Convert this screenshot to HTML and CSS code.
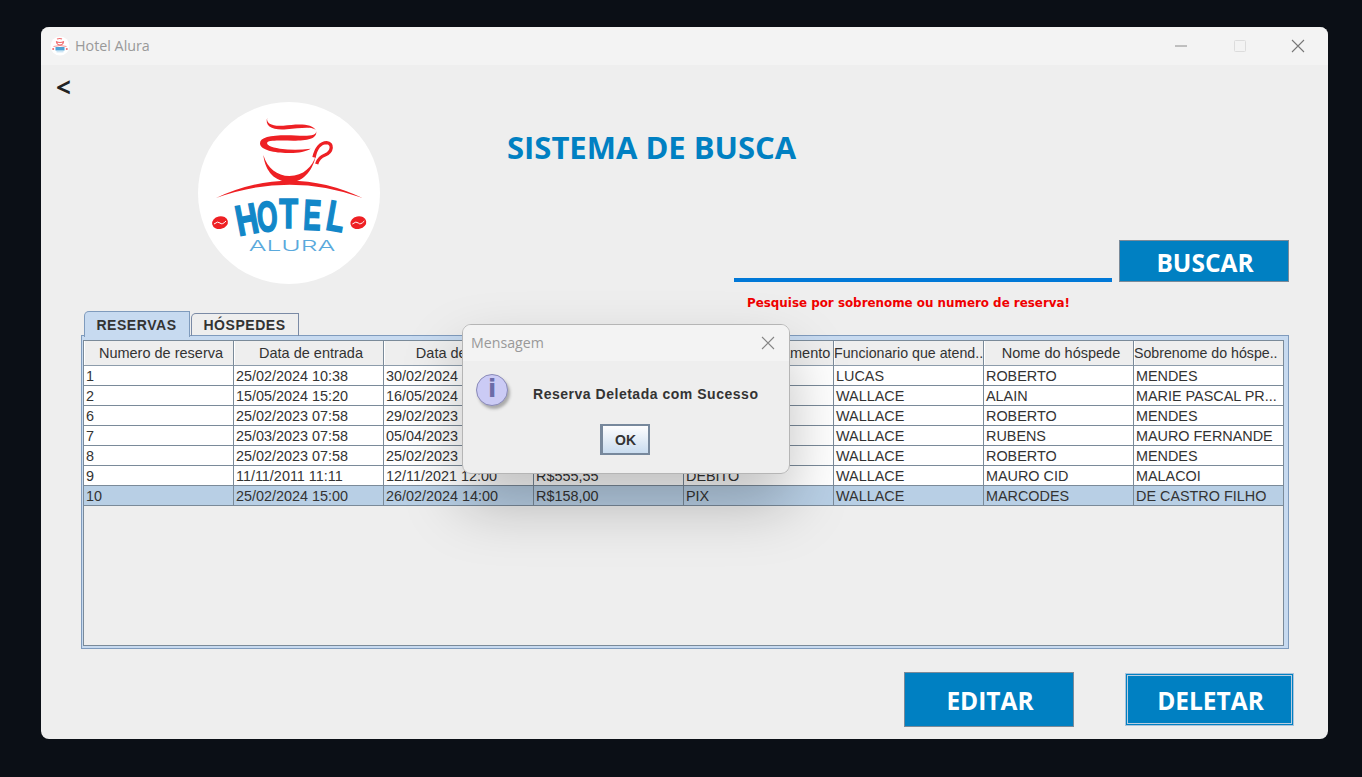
FILE: index.html
```html
<!DOCTYPE html>
<html lang="pt-BR">
<head>
    <meta charset="UTF-8">
    <meta name="viewport" content="width=device-width, initial-scale=1.0">
    <title>Hotel Alura</title>
    <link rel="stylesheet" href="styles.css">
</head>
<body>
    <div class="window">
        <!-- Title bar -->
        <div class="titlebar">
            <svg class="app-icon" viewBox="0 0 20 20">
                <circle cx="10" cy="10" r="9.5" fill="#fff"/>
                <path d="M7 3q3-1 5 0M6 5.500q4 2 8 0M6.500 6q.5 3 3.500 3T13.500 6" fill="none" stroke="#f0686a" stroke-width="1.100"/>
                <path d="M3.500 10.500q6.500-2 13 0" fill="none" stroke="#f0686a" stroke-width=".7"/>
                <path d="M5.500 11h9v3.500h-9z" fill="#4fa3d6"/>
                <path d="M6.500 15.800h7" stroke="#a8d2ec" stroke-width=".8"/>
                <circle cx="3.200" cy="13" r="1" fill="#f0686a"/>
                <circle cx="16.800" cy="13" r="1" fill="#f0686a"/>
            </svg>
            <span class="app-name">Hotel Alura</span>
            <div class="controls">
                <svg viewBox="0 0 14 14"><path d="M1 7h12" stroke="#8a8a8a" stroke-width="1"/></svg>
                <svg viewBox="0 0 14 14"><rect x="1.500" y="1.500" width="11" height="11" rx="1" fill="none" stroke="#dcdcdc"/></svg>
                <svg viewBox="0 0 14 14"><path d="M1 1l12 12M13 1L1 13" stroke="#777" stroke-width="1.100"/></svg>
            </div>
        </div>

        <div class="content">
            <div class="back">&lt;</div>

            <div class="top">
                <!-- Logo -->
                <svg class="logo" viewBox="24 6 546 546">
                    <circle cx="297" cy="279" r="273" fill="#fff"/>
                    <g fill="#ee2024">
                        <path d="M232 52C226 72 250 80 280 77 320 72 368 68 378 92 372 78 330 84 290 88 250 92 222 80 232 52z"/>
                        <path d="M378 90C385 115 330 106 290 106 240 106 210 113 210 130 210 152 260 160 300 159 325 159 350 154 362 146 330 150 300 150 270 146 242 142 228 135 232 127 238 120 280 122 310 122 350 122 385 118 378 90z"/>
                        <path d="M220 165C226 215 255 246 300 246 345 246 370 205 378 165 368 200 340 228 298 228 262 228 232 205 220 165z"/>
                        <path d="M78 294Q300 190 518 294 300 214 78 294z"/>
                    </g>
                    <path d="M372 172C378 145 392 128 410 128 430 130 428 155 405 165 392 170 384 178 380 192" fill="none" stroke="#ee2024" stroke-width="10"/>
                    <g class="logo-big" fill="#1287c8" stroke="#1287c8" stroke-width="5">
                        <text transform="translate(146 408) rotate(-11) scale(.72 1)">H</text>
                        <text transform="translate(204 396) rotate(-4) scale(.62 1)">O</text>
                        <text transform="translate(268 385) scale(.72 1)">T</text>
                        <text transform="translate(338 388) rotate(3) scale(.62 1)">E</text>
                        <text transform="translate(404 388) rotate(10) scale(.68 1)">L</text>
                    </g>
                    <text class="logo-small" x="176" y="452" textLength="260" lengthAdjust="spacingAndGlyphs" fill="#5aa9dc">ALURA</text>
                    <g fill="#ee2024">
                        <ellipse cx="90" cy="368" rx="24" ry="19" transform="rotate(-12 90 368)"/>
                        <ellipse cx="505" cy="368" rx="24" ry="19" transform="rotate(-12 505 368)"/>
                    </g>
                    <path d="M72 372q12-10 18-3t18-6M487 372q12-10 18-3t18-6" fill="none" stroke="#fff" stroke-width="3"/>
                </svg>

                <div class="top-right">
                    <h1>SISTEMA DE BUSCA</h1>
                    <div class="search">
                        <div class="search-input"></div>
                        <button class="btn btn-search">BUSCAR</button>
                    </div>
                    <p class="hint">Pesquise por sobrenome ou numero de reserva!</p>
                </div>
            </div>

            <!-- Tabs -->
            <div class="tabs">
                <div class="tab active">RESERVAS</div>
                <div class="tab">HÓSPEDES</div>
            </div>
            <div class="tab-pane">
                <div class="table-box">
                    <table>
                        <thead>
                            <tr>
                                <th>Numero de reserva</th>
                                <th>Data de entrada</th>
                                <th>Data de saída</th>
                                <th>Valor</th>
                                <th>Forma de pagamento</th>
                                <th class="th-fit">Funcionario que atend..</th>
                                <th>Nome do hóspede</th>
                                <th class="th-fit">Sobrenome do hóspe..</th>
                            </tr>
                        </thead>
                        <tbody>
                            <tr><td>1</td><td>25/02/2024 10:38</td><td>30/02/2024</td><td></td><td></td><td>LUCAS</td><td>ROBERTO</td><td>MENDES</td></tr>
                            <tr><td>2</td><td>15/05/2024 15:20</td><td>16/05/2024</td><td></td><td></td><td>WALLACE</td><td>ALAIN</td><td>MARIE PASCAL PR...</td></tr>
                            <tr><td>6</td><td>25/02/2023 07:58</td><td>29/02/2023</td><td></td><td></td><td>WALLACE</td><td>ROBERTO</td><td>MENDES</td></tr>
                            <tr><td>7</td><td>25/03/2023 07:58</td><td>05/04/2023</td><td></td><td></td><td>WALLACE</td><td>RUBENS</td><td>MAURO FERNANDE</td></tr>
                            <tr><td>8</td><td>25/02/2023 07:58</td><td>25/02/2023</td><td></td><td></td><td>WALLACE</td><td>ROBERTO</td><td>MENDES</td></tr>
                            <tr><td>9</td><td>11/11/2011 11:11</td><td>12/11/2021 12:00</td><td>R$555,55</td><td>DEBITO</td><td>WALLACE</td><td>MAURO CID</td><td>MALACOI</td></tr>
                            <tr class="selected"><td>10</td><td>25/02/2024 15:00</td><td>26/02/2024 14:00</td><td>R$158,00</td><td>PIX</td><td>WALLACE</td><td>MARCODES</td><td>DE CASTRO FILHO</td></tr>
                        </tbody>
                    </table>
                </div>
            </div>

            <!-- Bottom buttons -->
            <div class="actions">
                <button class="btn btn-action">EDITAR</button>
                <button class="btn btn-action btn-focus">DELETAR</button>
            </div>
        </div>

        <!-- Message dialog -->
        <div class="dialog">
            <div class="dialog-title">
                <span>Mensagem</span>
                <svg viewBox="0 0 14 14"><path d="M1 1l12 12M13 1L1 13" stroke="#858585" stroke-width="1.100"/></svg>
            </div>
            <div class="dialog-body">
                <div class="dialog-msg">
                    <div class="info-icon">i</div>
                    <p>Reserva Deletada com Sucesso</p>
                </div>
                <button class="btn-ok">OK</button>
            </div>
        </div>
    </div>
</body>
</html>
```

FILE: styles.css
```css
/* General Styles */
* {
    box-sizing: border-box;
}
html, body {
    height: 100%;
}
body {
    margin: 0;
    padding: 27px 34px 38px 41px;
    background-color: #0b0f16;
    font-family: "Liberation Sans", Arial, sans-serif;
    overflow: hidden;
}
.window {
    position: relative;
    height: 712px;
    border-radius: 8px;
    background-color: #eeeeee;
    overflow: hidden;
    box-shadow: inset 0 1px 0 #555;
}

/* Title bar */
.titlebar {
    display: flex;
    align-items: center;
    height: 38px;
    padding-left: 9px;
    padding-bottom: 1px;
    background-color: #f3f3f3;
}
.app-icon {
    width: 20px;
    height: 20px;
}
.app-name {
    margin-left: 5px;
    font-family: "Open Sans", sans-serif;
    font-size: 14.3px;
    color: #999;
}
.controls {
    display: flex;
    gap: 44.5px;
    margin-left: auto;
    margin-right: 23px;
}
.controls svg {
    width: 14px;
    height: 14px;
}

/* Main content */
.content {
    padding: 10px 34px 0 40px;
}
.back {
    height: 27px;
    margin-left: -25px;
    font-family: "Open Sans", sans-serif;
    font-size: 26px;
    font-weight: 700;
    line-height: 24px;
    color: #222;
}
.top {
    display: flex;
    height: 209px;
    padding-left: 117px;
    padding-right: 5px;
}
.logo {
    flex: none;
    width: 182px;
    height: 182px;
}
.logo-big text {
    font-family: "Liberation Sans", sans-serif;
    font-size: 128px;
    font-weight: 700;
}
.logo-small {
    font-family: "Inter", sans-serif;
    font-size: 44px;
    font-weight: 300;
}
.top-right {
    flex: 1;
    padding-left: 127px;
}
h1 {
    margin: 25px 0 0;
    font-family: "Open Sans", sans-serif;
    font-size: 31px;
    font-weight: 700;
    line-height: 40px;
    color: #0080c2;
}
.search {
    display: flex;
    align-items: flex-end;
    gap: 7px;
    margin-top: 73px;
    padding-left: 227px;
}
.search-input {
    flex: 1;
    height: 4px;
    background-color: #0078d7;
}
.hint {
    margin: 13px 0 0 240px;
    font-family: "DejaVu Sans", sans-serif;
    font-size: 11.9px;
    font-weight: 700;
    line-height: 16px;
    color: #f00000;
}

/* Buttons */
.btn {
    border: 1px solid #7a8a99;
    background-color: #0080c2;
    font-family: "Open Sans", sans-serif;
    font-weight: 700;
    color: #fff;
    padding: 2px 0 0 2px;
}
.btn-search {
    width: 170px;
    height: 42px;
    font-size: 24.5px;
}
.actions {
    display: flex;
    justify-content: flex-end;
    align-items: center;
    gap: 51px;
    margin-top: 23px;
}
.btn-action {
    width: 170px;
    height: 55px;
    font-size: 24.5px;
}
.btn-focus {
    width: 169px;
    height: 53px;
    border: 1px solid #a9c3dc;
    outline: 1px solid #b9cde0;
    outline-offset: -3px;
}

/* Tabs */
.tabs {
    display: flex;
    gap: 1px;
    height: 25px;
    margin-left: 3px;
    align-items: flex-end;
}
.tab {
    width: 108px;
    height: 23px;
    padding-right: 1px;
    border: 1px solid #7a8aa5;
    border-bottom: none;
    font-size: 14px;
    font-weight: 700;
    letter-spacing: .55px;
    line-height: 23px;
    text-align: center;
    color: #333;
}
.tab:first-child {
    border-top-left-radius: 5px;
}
.tab:nth-child(2) {
    border-top-left-radius: 5px;
}
.tab.active {
    position: relative;
    z-index: 1;
    width: 106px;
    height: 26px;
    background-color: #c7daf0;
    border-color: #7f9bbd;
    line-height: 27px;
    margin-bottom: -1px;
}
.tab-pane {
    display: flex;
    height: 314px;
    margin-top: -1px;
    margin-right: 5px;
    padding: 4px 4px 2px 1px;
    border: 1px solid #7f9bbd;
    background-color: #c7daf0;
}
.table-box {
    flex: 1;
    border: 1px solid #7a8a99;
    background-color: #eeeeee;
}

/* Table */
table {
    width: 1199px;
    border-collapse: separate;
    border-spacing: 0;
    table-layout: fixed;
    font-size: 14.4px;
    color: #333;
}
th, td {
    padding: 0;
    overflow: hidden;
    white-space: nowrap;
    border-right: 1px solid #7a8a99;
    border-bottom: 1px solid #7a8a99;
}
th {
    width: 150px;
    height: 25px;
    padding-left: 5px;
    font-weight: 400;
    font-size: 14.5px;
    text-align: center;
    background-color: #eeeeee;
    box-shadow: inset 1px 0 0 #fff;
    border-bottom-color: #8d9cab;
}
th.th-fit {
    padding-left: 0;
    font-size: 14.2px;
    text-align: left;
}
th:last-child {
    width: 149px;
}
th:last-child, td:last-child {
    border-right: none;
}
td {
    height: 20px;
    padding-left: 2px;
    padding-top: 1px;
    background-color: #fff;
    line-height: 18px;
}
.selected td {
    background-color: #b8cfe5;
}

/* Dialog */
.dialog {
    position: absolute;
    z-index: 1;
    left: 421px;
    top: 297px;
    width: 328px;
    height: 150px;
    border: 1px solid #b5b5b5;
    border-radius: 9px;
    background-color: #eeeeee;
    overflow: hidden;
}
.dialog-title {
    display: flex;
    align-items: center;
    justify-content: space-between;
    height: 36px;
    padding: 0 14px 1px 8px;
    background-color: #f3f3f3;
    font-family: "Open Sans", sans-serif;
    font-size: 14.2px;
    color: #999;
}
.dialog-title svg {
    width: 14px;
    height: 14px;
}
.dialog-body {
    display: flex;
    flex-direction: column;
    align-items: center;
}
.dialog-msg {
    display: flex;
    align-items: flex-start;
    align-self: stretch;
    padding: 13px 0 0 13px;
}
.dialog-msg p {
    margin: 11px 0 0 25px;
    font-size: 14px;
    font-weight: 700;
    letter-spacing: .52px;
    line-height: 18px;
    color: #333;
}
.info-icon {
    width: 32px;
    height: 32px;
    border: 1px solid #8a8ab8;
    border-radius: 50%;
    background-color: #cbcbf5;
    box-shadow: 2px 3px 3px #aaa;
    font-family: "DejaVu Sans", sans-serif;
    font-size: 24px;
    font-weight: 700;
    line-height: 29px;
    text-align: center;
    color: #6c6ca8;
}
.btn-ok {
    width: 50px;
    height: 31px;
    margin-top: 18px;
    margin-right: 2px;
    padding: 0;
    border: 2px solid #77889c;
    border-left-width: 3px;
    background: linear-gradient(#fdfdfe, #c9dcef);
    font-family: "Liberation Sans", sans-serif;
    font-size: 14px;
    font-weight: 700;
    color: #333;
}
/* shadow of the dialog, falls on the table behind it */
.window::after {
    content: "";
    position: absolute;
    left: 421px;
    top: 297px;
    width: 328px;
    height: 150px;
    border-radius: 9px;
    box-shadow: 0 30px 60px rgba(0, 0, 0, .25);
    pointer-events: none;
}
```
